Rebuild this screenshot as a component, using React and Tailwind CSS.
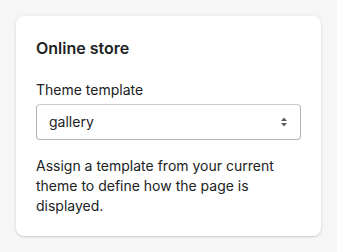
export default function App() {
  return (
    <div className="min-h-[252px] w-[337px] bg-[#f6f6f7] p-4" style={{ fontFamily: 'Inter, "Noto Sans", sans-serif' }}>
      <div className="rounded-lg bg-white p-5 shadow-[0_0_5px_rgba(23,24,24,0.05),0_1px_2px_rgba(0,0,0,0.15)]">
        <h2 className="text-[16px] font-semibold leading-6 text-[#202223]">Online store</h2>
        <div className="mt-5">
          <label className="block text-[14px] leading-5 text-[#202223]">Theme template</label>
          <div className="relative mt-1 flex h-9 items-center rounded-[4px] border border-[#aeb4b9] border-t-[#c9cccf] bg-white pl-3 pr-3">
            <span className="flex-1 text-[14px] leading-5 text-[#202223]">gallery</span>
            <svg width="8" height="12" viewBox="0 0 8 12" className="text-[#5c5f62]">
              <path d="M4 1.5 L7 5 H1 Z" fill="currentColor" />
              <path d="M4 10.5 L7 7 H1 Z" fill="currentColor" />
            </svg>
          </div>
        </div>
        <p className="mt-4 text-[14px] leading-5 text-[#202223]">
          Assign a template from your current theme to define how the page is displayed.
        </p>
      </div>
    </div>
  );
}
